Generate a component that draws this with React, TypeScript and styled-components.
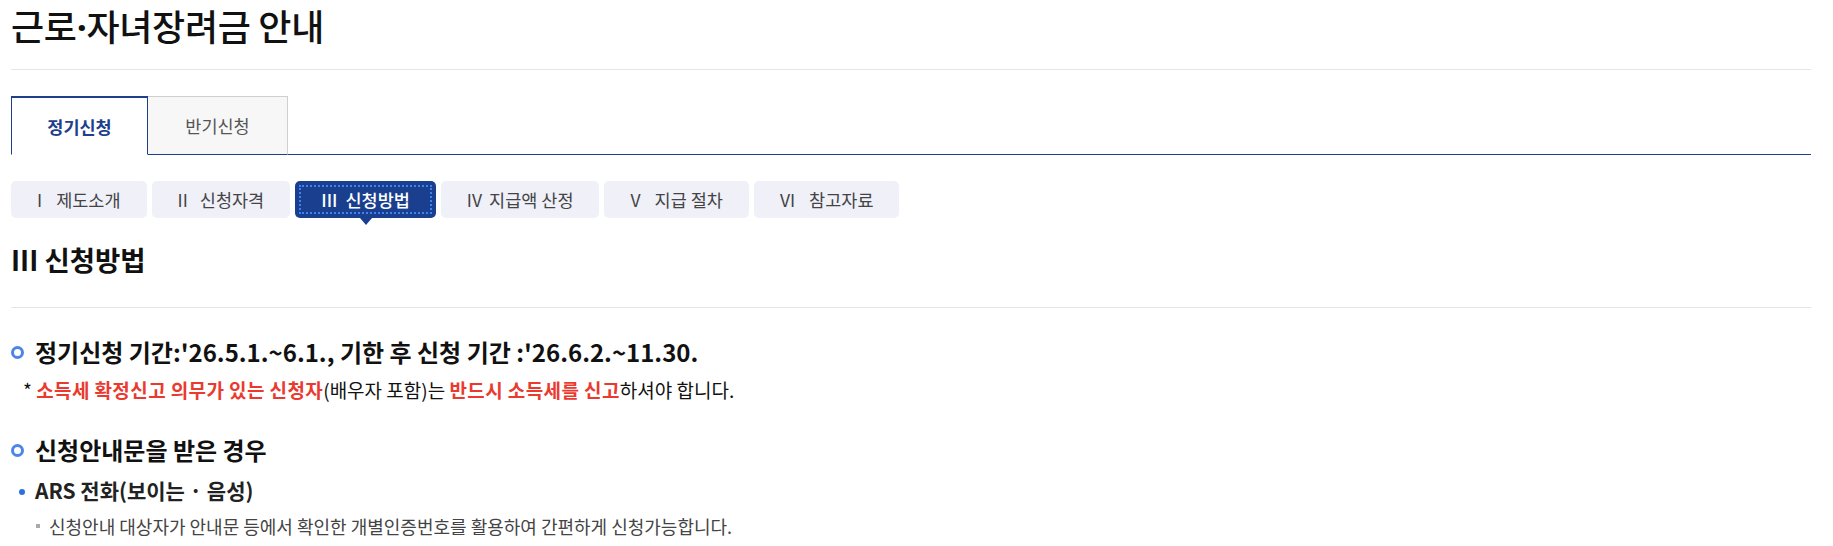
import React from "react";
import styled, { createGlobalStyle, css } from "styled-components";

const Global = createGlobalStyle`
  html, body { margin: 0; padding: 0; background: #fff; }
  body { font-family: "Noto Sans CJK KR", "Noto Sans", sans-serif; color: #111; }
  * { box-sizing: border-box; }
`;

const Page = styled.div`
  padding: 0 22px 0 11px;
  width: 1833px;
`;

const Title = styled.h1`
  margin: 0;
  height: 70px;
  font-size: 36px;
  font-weight: 500;
  line-height: 50px;
  letter-spacing: -0.3px;
  color: #111;
  border-bottom: 1px solid #e3e5ea;
`;

const MidDot = styled.span`
  font-family: "Noto Sans", "DejaVu Sans", sans-serif;
  font-weight: 700;
`;

const TabBar = styled.div`
  display: flex;
  margin-top: 26px;
  border-bottom: 1px solid #1d3f8c;
`;

const Tab = styled.div<{ $active?: boolean }>`
  width: ${(p) => (p.$active ? "137px" : "140px")};
  height: 59px;
  display: flex;
  align-items: center;
  justify-content: center;
  font-size: 17.5px;
  margin-bottom: -1px;
  ${(p) =>
    p.$active
      ? css`
          background: #fff;
          color: #1d3f8c;
          font-weight: 700;
          border: 1px solid #1d3f8c;
          border-top: 2px solid #1d3f8c;
          border-bottom: 1px solid #fff;
        `
      : css`
          background: #f7f7f7;
          color: #555;
          font-weight: 400;
          border: 1px solid #cfcfcf;
          border-left: none;
          border-bottom: 1px solid #1d3f8c;
        `}
`;

const PillRow = styled.div`
  display: flex;
  gap: 5px;
  margin-top: 26px;
`;

const Pill = styled.div<{ $active?: boolean }>`
  position: relative;
  height: 37px;
  padding: 0 26px;
  border-radius: 5px;
  display: flex;
  align-items: center;
  justify-content: center;
  font-size: 17.5px;
  white-space: pre;
  background: ${(p) => (p.$active ? "#193f8e" : "#eff0f8")};
  color: ${(p) => (p.$active ? "#fff" : "#444")};
  font-weight: ${(p) => (p.$active ? 500 : 400)};
  ${(p) =>
    p.$active &&
    css`
      &::before {
        content: "";
        position: absolute;
        inset: 4px;
        border: 2px dotted #3f83f2;
      }
      &::after {
        content: "";
        position: absolute;
        left: 50%;
        bottom: -7px;
        margin-left: -6px;
        border-left: 6px solid transparent;
        border-right: 6px solid transparent;
        border-top: 7px solid #193f8e;
      }
    `}
`;

const Numeral = styled.span`
  margin-right: 8px;
`;

const SectionTitle = styled.h2`
  margin: 22px 0 0;
  height: 68px;
  font-size: 27.5px;
  font-weight: 700;
  line-height: 38px;
  color: #111;
  border-bottom: 1px solid #e3e5ea;
`;

const Item = styled.div<{ $top: number }>`
  display: flex;
  align-items: center;
  gap: 11px;
  margin-top: ${(p) => p.$top}px;
  font-size: 24px;
  font-weight: 700;
  line-height: 34px;
  color: #111;
`;

const Ring = styled.span`
  width: 13px;
  height: 13px;
  border-radius: 50%;
  border: 3px solid #4d84e8;
  flex: none;
`;

const Note = styled.p`
  margin: 7px 0 0 12px;
  font-size: 19px;
  line-height: 28px;
  color: #111;
`;

const Red = styled.span`
  color: #ea3a30;
  font-weight: 700;
  letter-spacing: 0.4px;
`;

const SubItem = styled.div`
  display: flex;
  align-items: center;
  gap: 10px;
  margin: 8px 0 0 8px;
  font-size: 21px;
  font-weight: 600;
  line-height: 30px;
  color: #222;
`;

const Dot = styled.span`
  width: 6px;
  height: 6px;
  border-radius: 50%;
  background: #2d6fe0;
  margin-top: 4px;
  flex: none;
`;

const Desc = styled.div`
  display: flex;
  align-items: center;
  gap: 9px;
  margin: 7px 0 0 25px;
  font-size: 18px;
  line-height: 28px;
  color: #444;
`;

const Square = styled.span`
  width: 4px;
  height: 4px;
  background: #aaa;
  flex: none;
`;

const pills = [
  { n: "I", t: "제도소개", gap: 14 },
  { n: "II", t: "신청자격", gap: 12 },
  { n: "III", t: "신청방법", gap: 8, active: true },
  { n: "IV", t: "지급액 산정", gap: 7 },
  { n: "V", t: "지급 절차", gap: 14 },
  { n: "VI", t: "참고자료", gap: 14 },
];

export default function App() {
  return (
    <Page>
      <Global />
      <Title>
        근로<MidDot>·</MidDot>자녀장려금 안내
      </Title>
      <TabBar>
        <Tab $active>정기신청</Tab>
        <Tab>반기신청</Tab>
      </TabBar>
      <PillRow>
        {pills.map((p) => (
          <Pill key={p.n} $active={p.active}>
            <Numeral style={{ marginRight: p.gap }}>{p.n}</Numeral>
            {p.t}
          </Pill>
        ))}
      </PillRow>
      <SectionTitle>III 신청방법</SectionTitle>
      <Item $top={27}>
        <Ring />
        정기신청 기간:'26.5.1.~6.1., 기한 후 신청 기간 :'26.6.2.~11.30.
      </Item>
      <Note>
        * <Red>소득세 확정신고 의무가 있는 신청자</Red>(배우자 포함)는 <Red>반드시 소득세를 신고</Red>하셔야 합니다.
      </Note>
      <Item $top={29}>
        <Ring />
        신청안내문을 받은 경우
      </Item>
      <SubItem>
        <Dot />
        ARS 전화(보이는 · 음성)
      </SubItem>
      <Desc>
        <Square />
        신청안내 대상자가 안내문 등에서 확인한 개별인증번호를 활용하여 간편하게 신청가능합니다.
      </Desc>
    </Page>
  );
}
